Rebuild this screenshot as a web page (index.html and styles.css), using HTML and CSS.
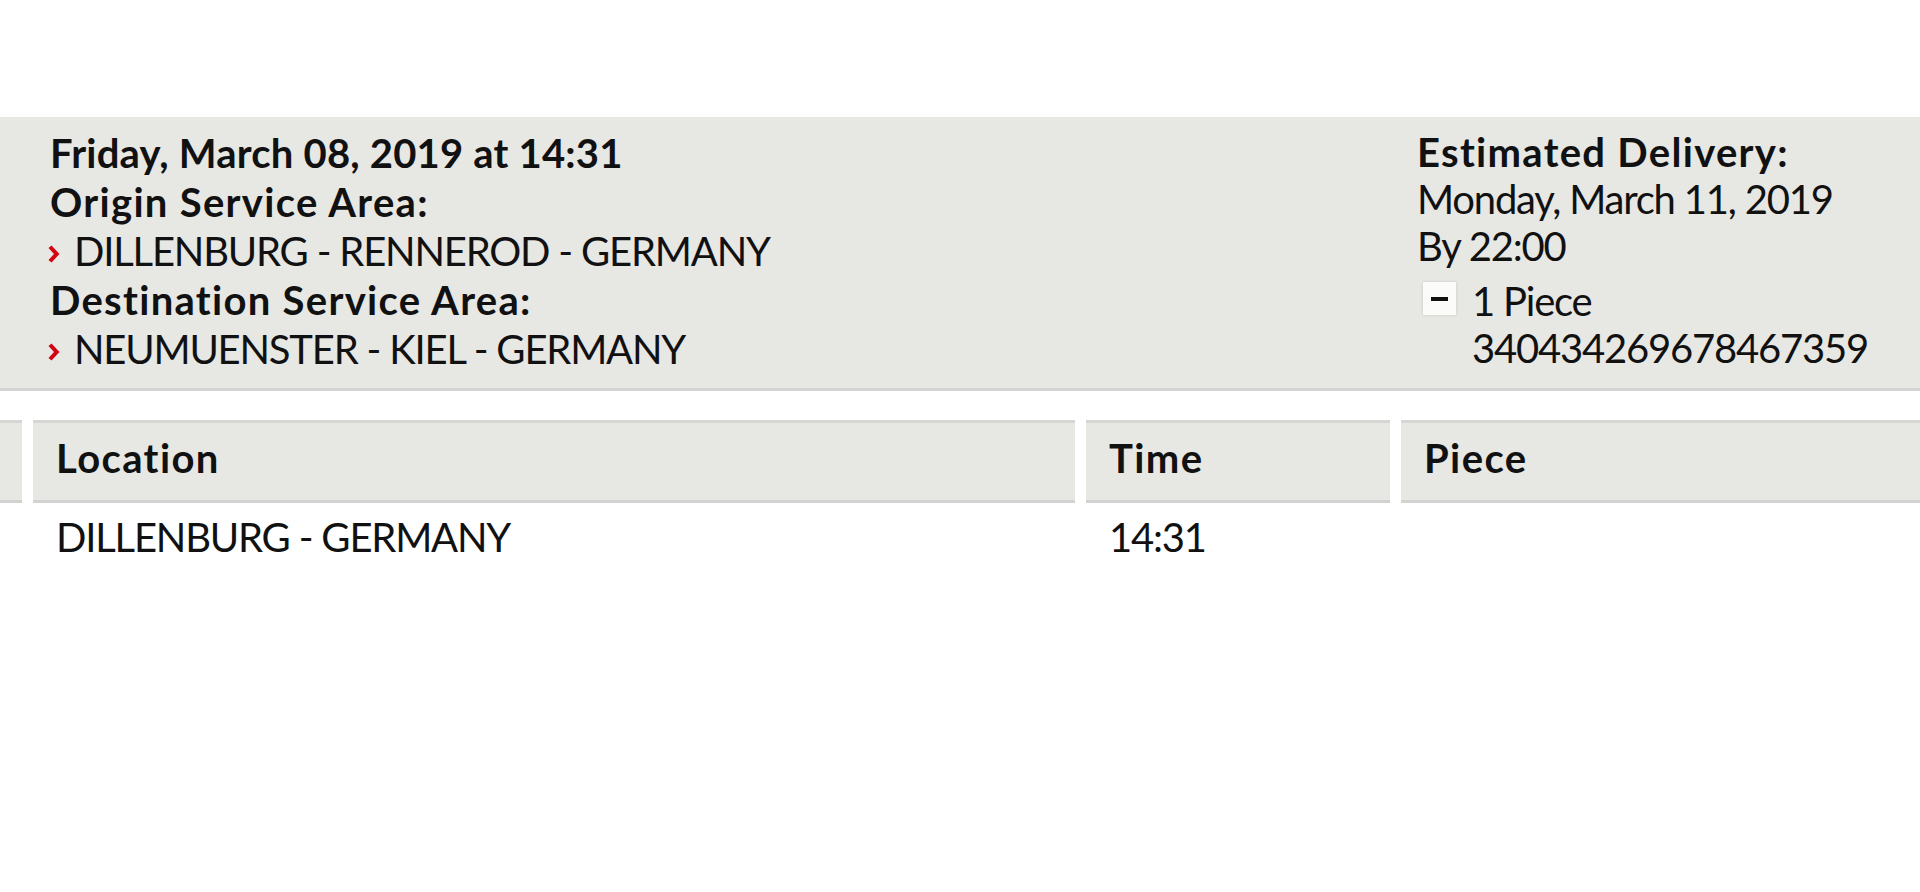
FILE: index.html
```html
<!DOCTYPE html>
<html lang="en">
<head>
    <meta charset="UTF-8">
    <meta name="viewport" content="width=device-width, initial-scale=1.0">
    <title>Shipment Tracking</title>
    <link rel="stylesheet" href="styles.css">
</head>
<body>
    <div class="summary">
        <div class="shipment">
            <p class="strong date">Friday, March 08, 2019 at 14:31</p>
            <p class="strong">Origin Service Area:</p>
            <p class="area"><svg class="chevron" viewBox="0 0 12 18"><polygon points="0.5,3 3.5,0.5 11.5,9 3.5,17.5 0.5,15 6,9"/></svg>DILLENBURG - RENNEROD - GERMANY</p>
            <p class="strong">Destination Service Area:</p>
            <p class="area"><svg class="chevron" viewBox="0 0 12 18"><polygon points="0.5,3 3.5,0.5 11.5,9 3.5,17.5 0.5,15 6,9"/></svg>NEUMUENSTER - KIEL - GERMANY</p>
        </div>
        <div class="delivery">
            <p class="strong">Estimated Delivery:</p>
            <p>Monday, March 11, 2019</p>
            <p>By 22:00</p>
            <div class="pieces">
                <span class="toggle"></span>
                <div>
                    <p>1 Piece</p>
                    <p>340434269678467359</p>
                </div>
            </div>
        </div>
    </div>

    <div class="events">
        <div class="cell head stub"></div>
        <div class="cell head">Location</div>
        <div class="cell head">Time</div>
        <div class="cell head">Piece</div>
        <div class="cell stub"></div>
        <div class="cell">DILLENBURG - GERMANY</div>
        <div class="cell">14:31</div>
        <div class="cell"></div>
    </div>
</body>
</html>
```

FILE: styles.css
```css
body, html {
    margin: 0;
    padding: 0;
    background-color: #ffffff;
    color: #111;
    font-family: Lato, "Open Sans", sans-serif;
    font-size: 40px;
    line-height: 49px;
    letter-spacing: -1.2px;
}
p {
    margin: 0;
}
.strong {
    font-weight: bold;
    letter-spacing: 1.3px;
}
.strong.date {
    letter-spacing: 0.2px;
}
.summary {
    margin-top: 117px;
    background-color: #e7e7e4;
    border-bottom: 3px solid #d4d4d2;
    padding: 12px 0 14px 50px;
    display: flex;
    justify-content: space-between;
}
.area {
    display: flex;
    align-items: center;
}
.chevron {
    width: 12px;
    height: 18px;
    margin: 4px 14px 0 -2px;
    fill: #d40511;
}
.delivery {
    width: 503px;
    line-height: 47px;
}
.pieces {
    display: flex;
    margin-top: 8px;
}
.toggle {
    width: 33px;
    height: 33px;
    margin: 4px 16px 0 6px;
    background-color: #fbfbfa;
    box-shadow: 0 0 3px rgba(0, 0, 0, 0.15);
    position: relative;
}
.toggle::after {
    content: "";
    position: absolute;
    left: 8px;
    top: 15px;
    width: 17px;
    height: 4px;
    background-color: #111;
}
.events {
    margin-top: 29px;
    display: grid;
    grid-template-columns: 22px 1042px 304px 1fr;
    column-gap: 11px;
}
.cell {
    padding: 10px 22px 17px 23px;
    min-height: 49px;
}
.cell.head {
    font-weight: bold;
    letter-spacing: 1.4px;
    background-color: #e7e7e4;
    border-top: 3px solid #d6d6d4;
    border-bottom: 3px solid #d2d2d0;
    padding-top: 11px;
}
.cell.stub {
    padding-left: 0;
    padding-right: 0;
}
```
